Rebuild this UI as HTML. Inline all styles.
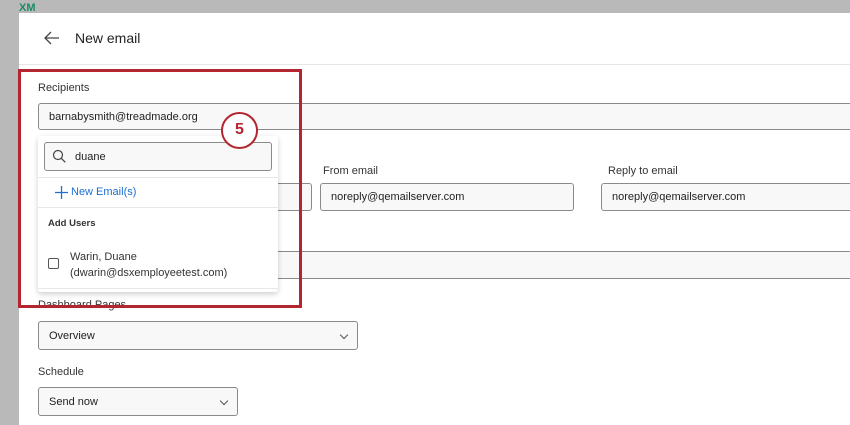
<!DOCTYPE html>
<html><head><style>
body{margin:0;width:850px;height:425px;overflow:hidden;background:#b9b9b9;font-family:"Liberation Sans",sans-serif;position:relative}
.a{position:absolute}
.modal{left:19px;top:13px;width:831px;height:412px;background:#fff}
.lbl{font-size:11px;color:#333}
.inp{background:#f8f8f8;border:1px solid #8a8a8a;border-radius:3px;box-sizing:border-box;font-size:11px;color:#222;padding-left:10px;display:flex;align-items:center}
.chev{position:absolute;right:10px;top:10px;width:5px;height:5px;border-right:1px solid #555;border-bottom:1px solid #555;transform:rotate(45deg)}
</style></head><body>
<div class="a" style="left:19px;top:2px;font-size:11px;color:#1a8a6a;font-weight:bold">XM</div>
<div class="a modal"></div>
<div class="a" style="left:19px;top:64px;width:831px;height:1px;background:#e6e6e6"></div>
<svg class="a" style="left:43px;top:31px" width="17" height="14"><path d="M16 7H2M8 1L2 7l6 6" fill="none" stroke="#444" stroke-width="1.3"/></svg>
<div class="a" style="left:75px;top:30px;font-size:14px;color:#222">New email</div>

<div class="a lbl" style="left:38px;top:82px">Recipients</div>
<div class="a inp" style="left:38px;top:103px;width:830px;height:27px">barnabysmith@treadmade.org</div>

<div class="a lbl" style="left:323px;top:165px">From email</div>
<div class="a lbl" style="left:608px;top:165px">Reply to email</div>
<div class="a inp" style="left:38px;top:183px;width:274px;height:28px"></div>
<div class="a inp" style="left:320px;top:183px;width:254px;height:28px">noreply@qemailserver.com</div>
<div class="a inp" style="left:601px;top:183px;width:260px;height:28px">noreply@qemailserver.com</div>
<div class="a inp" style="left:38px;top:251px;width:830px;height:28px"></div>

<div class="a lbl" style="left:38px;top:299px">Dashboard Pages</div>
<div class="a inp" style="left:38px;top:321px;width:320px;height:29px">Overview<div class="chev"></div></div>
<div class="a lbl" style="left:38px;top:366px">Schedule</div>
<div class="a inp" style="left:38px;top:387px;width:200px;height:29px">Send now<div class="chev"></div></div>

<div class="a" style="left:38px;top:136px;width:240px;height:156px;background:#fff;box-shadow:0 2px 6px rgba(0,0,0,.2);border-radius:3px"></div>
<div class="a inp" style="left:44px;top:142px;width:228px;height:29px;padding-left:30px">duane</div>
<svg class="a" style="left:52px;top:149px" width="14" height="14"><circle cx="6" cy="6" r="4.5" fill="none" stroke="#444" stroke-width="1.2"/><path d="M9.3 9.3l4 4" stroke="#444" stroke-width="1.3"/></svg>
<div class="a" style="left:38px;top:177px;width:240px;height:1px;background:#e8e8e8"></div>
<svg class="a" style="left:55px;top:186px" width="13" height="13"><path d="M6.5 0v13M0 6.5h13" stroke="#1a6fd0" stroke-width="1.3"/></svg>
<div class="a" style="left:71px;top:186px;font-size:11px;color:#1a6fd0">New Email(s)</div>
<div class="a" style="left:38px;top:207px;width:240px;height:1px;background:#e8e8e8"></div>
<div class="a" style="left:48px;top:218px;font-size:9.5px;font-weight:bold;color:#333">Add Users</div>
<div class="a" style="left:48px;top:258px;width:11px;height:11px;border:1px solid #555;border-radius:2px;box-sizing:border-box"></div>
<div class="a" style="left:70px;top:249px;font-size:11px;color:#333;line-height:16px">Warin, Duane<br>(dwarin@dsxemployeetest.com)</div>
<div class="a" style="left:38px;top:288px;width:240px;height:1px;background:#e8e8e8"></div>

<div class="a" style="left:18px;top:69px;width:284px;height:239px;border:3px solid #b3262f;box-sizing:border-box"></div>
<div class="a" style="left:221px;top:112px;width:37px;height:37px;border:2.5px solid #b3262f;border-radius:50%;box-sizing:border-box;background:#fff;text-align:center;font-size:16px;font-weight:bold;color:#b3262f;line-height:32px">5</div>
</body></html>
